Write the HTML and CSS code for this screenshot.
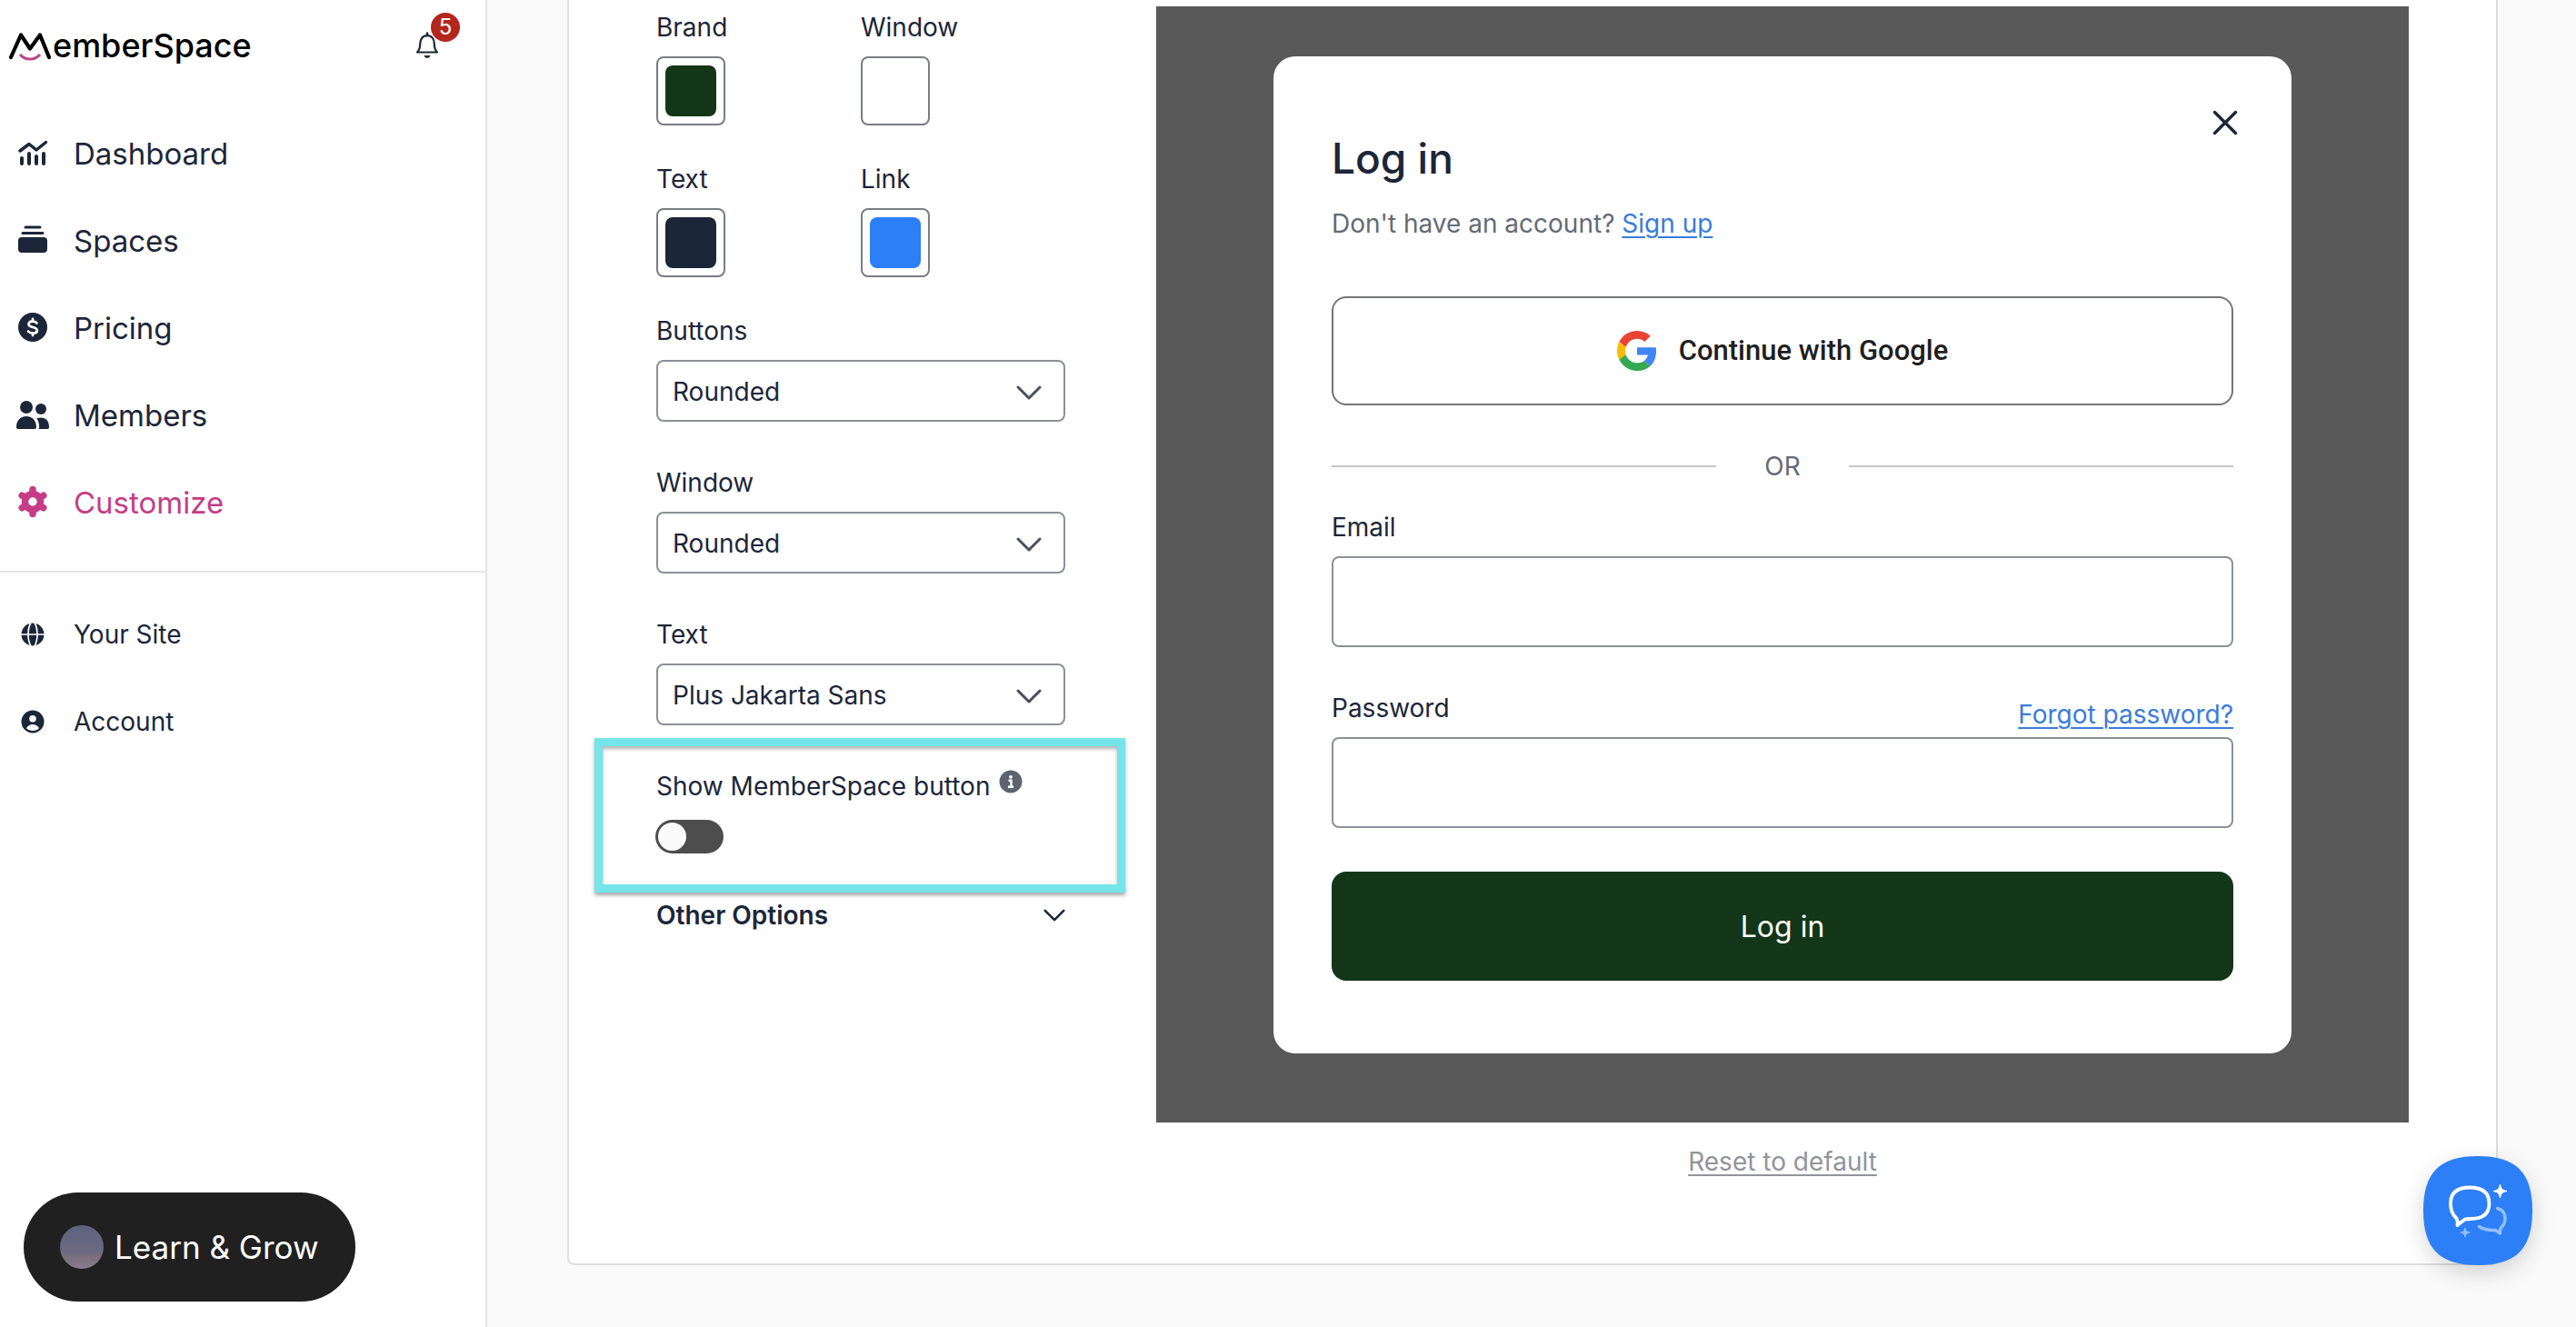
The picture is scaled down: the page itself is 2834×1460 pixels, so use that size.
FILE: index.html
```
<!DOCTYPE html>
<html lang="en">
<head>
  <meta charset="utf-8">
  <meta name="viewport" content="width=device-width, initial-scale=1">
  <title>MemberSpace – Customize</title>
  <link rel="stylesheet" href="styles.css">
</head>
<body>
  <div class="app">
    <aside class="sidebar">
      <header class="sidebar-head">
        <a class="logo" href="#" aria-label="MemberSpace">
          <svg class="logo-mark" viewBox="0 0 48 36" aria-hidden="true">
            <path d="M4 31 15 6.500 25 21.500 36 6.500 46 31" fill="none" stroke="#000" stroke-width="4.200" stroke-linecap="round" stroke-linejoin="round"/>
            <path d="M14 28c3 3.500 7 5 11 5s8-1.500 11-5" fill="none" stroke="#b9478b" stroke-width="3"/>
          </svg>
          <span>emberSpace</span>
        </a>
        <button class="bell" type="button" aria-label="Notifications">
          <svg viewBox="0 0 28 30" aria-hidden="true">
            <path d="M3 22.500c2.500-2.500 3.200-5.500 3.200-9C6.200 8 9 4.200 14 4.200s7.800 3.800 7.800 9.300c0 3.500.7 6.500 3.200 9z" fill="none" stroke="#1c2639" stroke-width="2.200" stroke-linejoin="round"/>
            <path d="M14 1.500v2.500" stroke="#1c2639" stroke-width="2.500" stroke-linecap="round"/>
            <path d="M10.500 26h7c-.6 1.900-1.800 2.800-3.500 2.800s-2.900-.9-3.500-2.800z" fill="#1c2639"/>
          </svg>
          <span class="badge">5</span>
        </button>
      </header>

      <nav class="nav" aria-label="Main">
        <a class="nav-item" href="#">
          <svg class="nav-icon" viewBox="0 0 36 36" aria-hidden="true"><g fill="none" stroke="currentColor" stroke-width="4" stroke-linecap="round" stroke-linejoin="round"><path d="M4 15 14 7.500 22 14 32.500 5.500" stroke-width="3.500"/><path d="M6 23v6M14 18v11M22 21v8M30 18v11"/></g></svg>
          Dashboard
        </a>
        <a class="nav-item" href="#">
          <svg class="nav-icon" viewBox="0 0 36 36" aria-hidden="true"><path d="M10 3h16M7 9.500h22" stroke="currentColor" stroke-width="3" stroke-linecap="round"/><rect x="2" y="14" width="32" height="17" rx="4" fill="currentColor"/></svg>
          Spaces
        </a>
        <a class="nav-item" href="#">
          <svg class="nav-icon" viewBox="0 0 36 36" aria-hidden="true"><circle cx="18" cy="17" r="16" fill="currentColor"/><path d="M22.500 12.500c-1-1.300-2.600-2-4.500-2-2.700 0-4.500 1.200-4.500 3.200 0 4.300 9.300 2.300 9.300 6.800 0 2-1.900 3.200-4.700 3.200-2.100 0-3.900-.8-5-2.200M18 8v2.500M18 23.500V26" fill="none" stroke="#fff" stroke-width="2.800" stroke-linecap="round"/></svg>
          Pricing
        </a>
        <a class="nav-item" href="#">
          <svg class="nav-icon" viewBox="0 0 36 36" aria-hidden="true"><g fill="currentColor"><circle cx="11" cy="9" r="7"/><circle cx="27" cy="11" r="6"/><path d="M2 33c-1.400 0-2-.7-2-2 0-7 4-12 11-12s11 5 11 12c0 1.300-.6 2-2 2zM22.300 21.200c1.300-.5 2.800-.7 4.700-.7 6 0 9 4.500 9 10.500 0 1.300-.6 2-1.800 2h-9.700c.4-.8.600-1.600.6-2.500 0-3.700-.9-6.900-2.800-9.300z"/></g></svg>
          Members
        </a>
        <a class="nav-item nav-item-active" href="#" aria-current="page">
          <svg class="nav-icon" viewBox="0 0 36 36" aria-hidden="true"><circle cx="18" cy="17" r="8.500" fill="none" stroke="currentColor" stroke-width="7.500"/><g stroke="currentColor" stroke-width="7.500" stroke-linecap="round"><path d="M18 6.500V3.500M18 27.500v3M8.900 11.700 6.200 10.200M27.100 22.300l2.700 1.500M27.100 11.700l2.700-1.500M8.900 22.300l-2.700 1.500"/></g></svg>
          Customize
        </a>
      </nav>

      <nav class="nav nav-secondary" aria-label="Account">
        <a class="nav-item" href="#">
          <svg class="nav-icon" viewBox="0 0 36 36" aria-hidden="true"><circle cx="18" cy="18" r="12.500" fill="currentColor"/><path d="M5 18h26M16 5c-4 7-4 19 0 26M20 5c4 7 4 19 0 26" fill="none" stroke="#fff" stroke-width="1.700"/></svg>
          Your Site
        </a>
        <a class="nav-item" href="#">
          <svg class="nav-icon" viewBox="0 0 36 36" aria-hidden="true"><circle cx="18" cy="18" r="12.500" fill="currentColor"/><circle cx="18" cy="14.800" r="3.800" fill="#fff"/><path d="M11 25.300c1.300-2.600 3.900-4.200 7-4.200s5.700 1.600 7 4.200c-1.900 1.700-4.300 2.700-7 2.700s-5.100-1-7-2.700z" fill="#fff"/></svg>
          Account
        </a>
      </nav>

      <button class="learn" type="button"><span class="learn-photo"></span>Learn &amp; Grow</button>
    </aside>

    <main class="main">
      <section class="card">
        <div class="options">
          <div class="swatches">
            <div class="field">
              <label for="c-brand">Brand</label>
              <input class="swatch" id="c-brand" type="color" value="#143618">
            </div>
            <div class="field">
              <label for="c-window">Window</label>
              <input class="swatch" id="c-window" type="color" value="#ffffff">
            </div>
            <div class="field">
              <label for="c-text">Text</label>
              <input class="swatch" id="c-text" type="color" value="#1c2639">
            </div>
            <div class="field">
              <label for="c-link">Link</label>
              <input class="swatch" id="c-link" type="color" value="#2c7ff6">
            </div>
          </div>

          <div class="selects">
            <div class="field">
              <label for="s-buttons">Buttons</label>
              <div class="select">
                <select id="s-buttons"><option>Rounded</option><option>Square</option></select>
                <svg class="chevron" viewBox="0 0 28 16" aria-hidden="true"><path d="M2 2l12 12L26 2"/></svg>
              </div>
            </div>
            <div class="field">
              <label for="s-window">Window</label>
              <div class="select">
                <select id="s-window"><option>Rounded</option><option>Square</option></select>
                <svg class="chevron" viewBox="0 0 28 16" aria-hidden="true"><path d="M2 2l12 12L26 2"/></svg>
              </div>
            </div>
            <div class="field">
              <label for="s-text">Text</label>
              <div class="select">
                <select id="s-text"><option>Plus Jakarta Sans</option><option>Inter</option></select>
                <svg class="chevron" viewBox="0 0 28 16" aria-hidden="true"><path d="M2 2l12 12L26 2"/></svg>
              </div>
            </div>
          </div>

          <div class="highlight">
            <div class="highlight-label">
              <label for="show-button">Show MemberSpace button</label>
              <svg class="info" viewBox="0 0 26 26" aria-hidden="true"><circle cx="13" cy="13" r="12.500" fill="#5d6470"/><circle cx="13" cy="7.800" r="1.900" fill="#fff"/><path d="M10.500 11.800h3v6.700M10 18.700h6" fill="none" stroke="#fff" stroke-width="2.400"/></svg>
            </div>
            <input class="toggle" id="show-button" type="checkbox">
          </div>

          <button class="more" type="button">
            Other Options
            <svg class="chevron chevron-dark" viewBox="0 0 28 16" aria-hidden="true"><path d="M2 2l12 12L26 2"/></svg>
          </button>
        </div>

        <div class="preview">
          <div class="stage">
            <form class="modal">
              <button class="close" type="button" aria-label="Close">
                <svg viewBox="0 0 28 28" aria-hidden="true"><path d="M2.500 2.500l23 23M25.500 2.500l-23 23" stroke="#1c2639" stroke-width="3.400" stroke-linecap="round"/></svg>
              </button>
              <h1>Log in</h1>
              <p class="sub">Don't have an account? <a href="#">Sign up</a></p>
              <button class="google" type="button">
                <svg viewBox="0 0 48 48" aria-hidden="true">
                  <path fill="#EA4335" d="M24 9.500c3.540 0 6.710 1.220 9.210 3.600l6.850-6.850C35.900 2.380 30.470 0 24 0 14.620 0 6.510 5.380 2.560 13.220l7.980 6.190C12.430 13.720 17.740 9.500 24 9.500z"/>
                  <path fill="#4285F4" d="M46.980 24.550c0-1.570-.15-3.090-.38-4.550H24v9.020h12.940c-.58 2.960-2.260 5.480-4.780 7.180l7.730 6c4.510-4.180 7.090-10.360 7.090-17.650z"/>
                  <path fill="#FBBC05" d="M10.530 28.590c-.48-1.450-.76-2.990-.76-4.590s.27-3.140.76-4.590l-7.980-6.190C.92 16.460 0 20.120 0 24c0 3.880.92 7.540 2.560 10.780l7.970-6.190z"/>
                  <path fill="#34A853" d="M24 48c6.480 0 11.930-2.130 15.890-5.810l-7.730-6c-2.150 1.450-4.920 2.300-8.160 2.300-6.260 0-11.570-4.220-13.470-9.910l-7.980 6.190C6.510 42.620 14.620 48 24 48z"/>
                </svg>
                Continue with Google
              </button>
              <div class="or">OR</div>
              <div class="form-field">
                <label for="email">Email</label>
                <input id="email" type="email">
              </div>
              <div class="form-field form-field-password">
                <label for="password">Password</label>
                <a class="forgot" href="#">Forgot password?</a>
                <input id="password" type="password">
              </div>
              <button class="submit" type="submit">Log in</button>
            </form>
          </div>
          <a class="reset" href="#">Reset to default</a>
        </div>
      </section>
    </main>
  </div>

  <button class="chat" type="button" aria-label="Open chat">
    <svg viewBox="0 0 120 120" aria-hidden="true">
      <path d="M60 0C102 0 120 18 120 60s-18 60-60 60S0 102 0 60 18 0 60 0z" fill="#2c7ff6"/>
      <path d="M51 34.500c14 0 21.500 6 21.500 17.500S66 69 52 69c-3 0-5 .1-6.500.8L37.500 76c.6-3.500.3-6-1.500-8.200-4-3.600-6-8.800-6-15.800 0-11.500 7-17.500 21-17.500z" fill="none" stroke="#fff" stroke-width="3.800" stroke-linejoin="round"/>
      <path d="M81.500 57.500c5.500 1.500 8.500 5 8.500 11 0 4-1.200 7.500-4.500 10-1 1.500-1.200 3.500-1 6.500l-5-3.500c-7 .2-13-.5-18-4" fill="none" stroke="#94bffb" stroke-width="3.400" stroke-linecap="round" stroke-linejoin="round"/>
      <path d="M84.500 31c1 5 2.500 6.500 7.500 7.500-5 1-6.500 2.500-7.500 7.500-1-5-2.500-6.500-7.500-7.500 5-1 6.500-2.500 7.500-7.500z" fill="#fff" stroke="#fff"/>
      <path d="M46 79c.7 3.400 1.600 4.300 5 5-3.400.7-4.300 1.600-5 5-.7-3.400-1.600-4.300-5-5 3.400-.7 4.300-1.600 5-5z" fill="#94bffb" stroke="#94bffb"/>
    </svg>
  </button>
</body>
</html>
```
FILE: styles.css
```
:root {
  --ink: #1c2639;
  --muted: #646a76;
  --line: #8d9097;
  --link: #3a7cdb;
  --brand: #143618;
  --pink: #c43d85;
}

* {
  box-sizing: border-box;
}

body {
  margin: 0;
  background: #fafafa;
  color: var(--ink);
  font: 400 28px/36px Inter, "Liberation Sans", sans-serif;
}

button,
input,
select {
  margin: 0;
  font: inherit;
  color: inherit;
}

button {
  padding: 0;
  border: 0;
  background: none;
  cursor: pointer;
}

svg {
  display: block;
  flex: none;
}

h1,
p {
  margin: 0;
}

.app {
  display: flex;
  min-height: 100vh;
}

/* Sidebar */

.sidebar {
  display: flex;
  flex: none;
  flex-direction: column;
  width: 536px;
  background: #fff;
  border-right: 2px solid #e5e5e6;
}

.sidebar-head {
  display: flex;
  align-items: center;
  justify-content: space-between;
  padding: 28px 50px 49px 8px;
}

.logo {
  display: flex;
  align-items: center;
  gap: 2px;
  color: #000;
  font-size: 36px;
  font-weight: 500;
  line-height: 44px;
  text-decoration: none;
}

.logo-mark {
  width: 48px;
  height: 36px;
}

.bell {
  position: relative;
  width: 28px;
  height: 30px;
}

.badge {
  position: absolute;
  right: -22px;
  bottom: 19px;
  width: 32px;
  height: 32px;
  border-radius: 50%;
  background: #b3261e;
  color: #fff;
  font-size: 24px;
  line-height: 32px;
  text-align: center;
}

.nav-item {
  display: flex;
  align-items: center;
  gap: 27px;
  height: 96px;
  padding-left: 18px;
  color: var(--ink);
  font-size: 33px;
  text-decoration: none;
}

.nav-icon {
  width: 36px;
  height: 36px;
}

.nav-item-active {
  color: var(--pink);
}

.nav-secondary {
  margin-top: 27px;
  padding-top: 20px;
  border-top: 2px solid #e5e5e6;
}

.nav-secondary .nav-item {
  font-size: 28px;
}

.learn {
  display: flex;
  align-items: center;
  gap: 12px;
  height: 120px;
  margin: auto auto 28px 26px;
  padding: 0 40px;
  border-radius: 60px;
  background: #202020;
  color: #fff;
  font-size: 35px;
}

.learn-photo {
  width: 48px;
  height: 48px;
  border-radius: 50%;
  background: linear-gradient(#5d6280, #6b6a80 60%, #7d6f7e 75%, #86808f);
}

/* Customize card */

.main {
  flex: 1;
  min-width: 0;
  padding: 0 86px 68px 88px;
}

.card {
  display: grid;
  grid-template-columns: 450px minmax(0, 1fr);
  gap: 100px;
  padding: 7px 96px 94px;
  background: #fff;
  border: solid #dedede;
  border-width: 0 2px 2px;
  border-radius: 0 0 8px 8px;
}

.options {
  padding-top: 5px;
}

.swatches {
  display: grid;
  grid-template-columns: 1fr 1fr;
  row-gap: 41px;
}

.field {
  display: grid;
  gap: 14px;
}

.swatch {
  width: 76px;
  height: 76px;
  padding: 8px;
  appearance: none;
  background: #fff;
  border: 2px solid #797d84;
  border-radius: 8px;
}

.swatch::-webkit-color-swatch-wrapper {
  padding: 0;
}

.swatch::-webkit-color-swatch {
  border: 0;
  border-radius: 8px;
}

.selects {
  display: grid;
  gap: 49px;
  margin-top: 41px;
}

.select {
  display: grid;
  align-items: center;
}

.select > * {
  grid-area: 1 / 1;
}

.select select {
  width: 100%;
  height: 68px;
  padding: 2px 64px 0 16px;
  appearance: none;
  background: #fff;
  border: 2px solid var(--line);
  border-radius: 8px;
}

.chevron {
  width: 28px;
  height: 16px;
  fill: none;
  stroke: #4a4f5c;
  stroke-width: 3;
  stroke-linecap: round;
  stroke-linejoin: round;
}

.select .chevron {
  justify-self: end;
  margin: 4px 26px 0 0;
  pointer-events: none;
}

.chevron-dark {
  width: 24px;
  stroke: var(--ink);
}

.highlight {
  margin: 14px -66px 7px -68px;
  padding: 26px 57px 34px 59px;
  border: 9px solid #75e5ea;
  box-shadow: 0 3px 4px rgb(0 0 0 / 35%), inset 0 3px 4px rgb(0 0 0 / 30%);
}

.highlight-label {
  display: flex;
  gap: 10px;
}

.info {
  width: 26px;
  height: 26px;
}

.toggle {
  display: block;
  width: 75px;
  height: 37px;
  margin: 19px 0 0 -1px;
  padding: 3px;
  appearance: none;
  border-radius: 19px;
  background: #4d4d4d;
}

.toggle::before {
  display: block;
  width: 31px;
  height: 31px;
  border-radius: 50%;
  background: #fafafa;
  content: "";
}

.toggle:checked::before {
  margin-left: auto;
}

.more {
  display: flex;
  align-items: center;
  justify-content: space-between;
  width: 100%;
  font-weight: 600;
}

/* Preview */

.preview {
  display: flex;
  flex-direction: column;
  align-items: center;
  gap: 25px;
}

.stage {
  width: 100%;
  padding: 55px 129px 76px;
  background: #595959;
}

.modal {
  position: relative;
  display: flex;
  flex-direction: column;
  padding: 84px 64px 80px;
  background: #fff;
  border-radius: 24px;
}

.close {
  position: absolute;
  top: 59px;
  right: 59px;
  width: 28px;
  height: 28px;
}

h1 {
  font-size: 46px;
  font-weight: 500;
  line-height: 56px;
}

.sub {
  margin-top: 26px;
  color: var(--muted);
}

.sub a,
.forgot {
  color: var(--link);
  text-decoration-thickness: 2px;
  text-underline-offset: 4px;
}

.google {
  display: flex;
  align-items: center;
  justify-content: center;
  gap: 24px;
  height: 120px;
  margin-top: 62px;
  border: 2px solid #747775;
  border-radius: 16px;
  color: #1f1f1f;
  font-family: Roboto, "Liberation Sans", sans-serif;
  font-size: 31px;
  font-weight: 500;
}

.google svg {
  width: 44px;
  height: 44px;
}

.or {
  display: flex;
  align-items: center;
  gap: 53px;
  margin: 49px 0 31px;
  color: var(--muted);
}

.or::before,
.or::after {
  flex: 1;
  height: 2px;
  background: #c5c5c6;
  content: "";
}

.form-field {
  display: grid;
  gap: 14px;
}

.form-field input {
  width: 100%;
  height: 100px;
  padding: 0 24px;
  background: #fff;
  border: 2px solid var(--line);
  border-radius: 8px;
}

.form-field-password {
  grid-template-columns: 1fr auto;
  row-gap: 7px;
  margin-top: 49px;
}

.form-field-password input {
  grid-column: 1 / -1;
}

.forgot {
  padding-top: 7px;
}

.submit {
  height: 120px;
  margin-top: 48px;
  padding-top: 2px;
  border-radius: 16px;
  background: var(--brand);
  color: #fff;
  font-size: 32px;
}

.reset {
  color: #91949b;
  text-decoration-thickness: 2px;
  text-underline-offset: 4px;
}

/* Chat launcher */

.chat {
  position: fixed;
  right: 48px;
  bottom: 68px;
  width: 120px;
  height: 120px;
  filter: drop-shadow(0 8px 12px rgb(0 0 0 / 16%));
}
```
